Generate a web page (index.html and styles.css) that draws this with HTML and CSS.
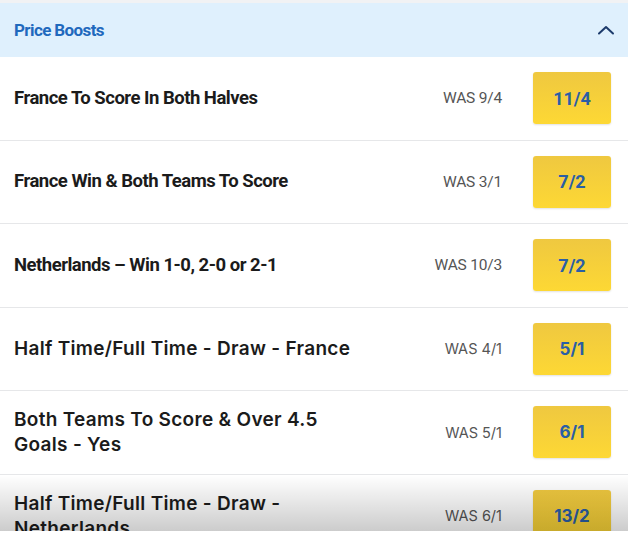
FILE: index.html
```html
<!DOCTYPE html>
<html lang="en">
<head>
<meta charset="UTF-8" />
<meta name="viewport" content="width=device-width, initial-scale=1" />
<title>Price Boosts</title>
<link rel="stylesheet" href="styles.css">
</head>
<body>

<div class="panel">
  <div class="panel-head">
    <span class="panel-title">Price Boosts</span>
    <svg class="chevron" width="18" height="10" viewBox="0 0 18 10">
      <path d="M2 8.5 L9 2 L16 8.5" fill="none" stroke="#1d3b6c" stroke-width="2" stroke-linecap="round" stroke-linejoin="round"/>
    </svg>
  </div>

  <div class="list">
    <div class="row row-narrow">
      <div class="name">France To Score In Both Halves</div>
      <div class="was">WAS 9/4</div>
      <button class="price">11/4</button>
    </div>
    <div class="row row-narrow">
      <div class="name">France Win &amp; Both Teams To Score</div>
      <div class="was">WAS 3/1</div>
      <button class="price">7/2</button>
    </div>
    <div class="row row-narrow">
      <div class="name">Netherlands – Win 1-0, 2-0 or 2-1</div>
      <div class="was">WAS 10/3</div>
      <button class="price">7/2</button>
    </div>
    <div class="row">
      <div class="name">Half Time/Full Time - Draw - France</div>
      <div class="was">WAS 4/1</div>
      <button class="price">5/1</button>
    </div>
    <div class="row">
      <div class="name">Both Teams To Score &amp; Over 4.5 Goals - Yes</div>
      <div class="was">WAS 5/1</div>
      <button class="price">6/1</button>
    </div>
    <div class="row">
      <div class="name">Half Time/Full Time - Draw - Netherlands</div>
      <div class="was">WAS 6/1</div>
      <button class="price">13/2</button>
    </div>
    <div class="fade"></div>
  </div>
</div>

</body>
</html>
```

FILE: styles.css
```css
body {
  margin: 0;
  background: #fff;
  font-family: Inter, 'Noto Sans', sans-serif;
}

.panel {
  border-top: 3px solid #f1f2f4;
}

.panel-head {
  display: flex;
  align-items: center;
  justify-content: space-between;
  height: 54px;
  padding: 0 13px 0 14px;
  background: #dff0fd;
}

.panel-title {
  color: #1f69bd;
  font-family: Roboto, sans-serif;
  font-size: 17px;
  font-weight: 700;
  letter-spacing: -0.6px;
}

.list {
  position: relative;
  height: 474px;
  overflow: hidden;
}

.row {
  display: flex;
  align-items: center;
  height: 82.5px;
  padding: 0 17px 0 14px;
  border-bottom: 1px solid #e6e7e9;
}

.name {
  flex: 1;
  max-width: 350px;
  color: #1b1b1b;
  font-size: 19px;
  font-weight: 600;
  line-height: 25px;
  letter-spacing: 0.3px;
}

.was {
  margin-left: auto;
  margin-right: 31px;
  color: #555;
  font-size: 14.5px;
}

.price {
  width: 78px;
  height: 52px;
  border: none;
  border-radius: 3px;
  background: linear-gradient(180deg, #efc840 0%, #fdd834 100%);
  box-shadow: 0 1px 2px rgba(0,0,0,0.12);
  color: #2a5ea6;
  font-family: inherit;
  font-size: 17px;
  font-weight: 700;
}

/* first rows are set in the narrower face */
.row-narrow .name,
.row-narrow .was,
.row-narrow .price {
  font-family: Roboto, sans-serif;
}

.row-narrow .name {
  font-size: 18.5px;
  font-weight: 700;
  letter-spacing: -0.5px;
}

.row-narrow .was {
  font-size: 15.5px;
  letter-spacing: -0.2px;
}

.row-narrow .price {
  font-size: 18px;
}

/* bottom scroll shade */
.fade {
  position: absolute;
  left: 0;
  right: 0;
  bottom: 0;
  height: 56px;
  background: linear-gradient(180deg, rgba(0,0,0,0) 0%, rgba(0,0,0,0.2) 100%);
  pointer-events: none;
}
```
